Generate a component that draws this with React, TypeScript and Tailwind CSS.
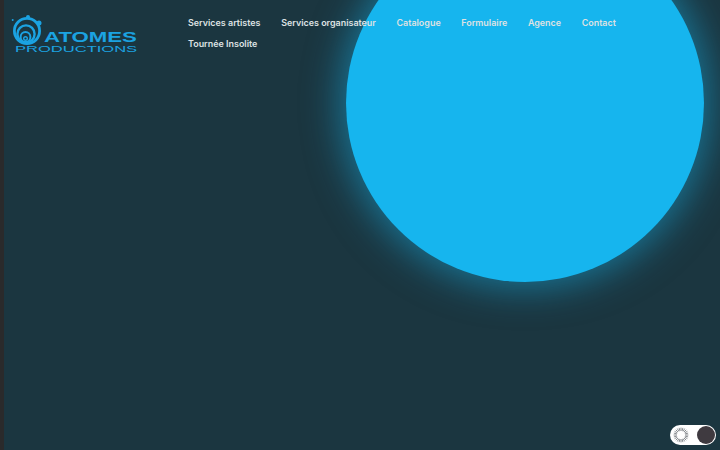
export default function App() {
  const items = ["Services artistes", "Services organisateur", "Catalogue", "Formulaire", "Agence", "Contact", "Tournée Insolite"];
  return (
    <div className="relative flex h-[450px] w-[720px] overflow-hidden bg-[#1b3640] font-['Inter',sans-serif]">
      <div className="absolute left-[346px] top-[-76px] h-[358px] w-[358px] rounded-full bg-[#16b5ee] shadow-[0_0_36px_6px_rgba(22,181,238,0.5)]" />
      <div className="relative h-full w-[4px] shrink-0 bg-[#2a2a2b]" />
      <header className="relative flex h-fit flex-1 items-start pl-[7px] pt-[13px]">
        <div className="flex h-[40px] w-[126px] shrink-0 flex-col">
          <div className="flex h-[31px] items-start">
            <svg width="33" height="32" viewBox="0 0 33 32" fill="none" className="shrink-0">
              <circle cx="16" cy="18" r="12.6" stroke="#1ba3e2" strokeWidth="2.8" />
              <circle cx="15" cy="21" r="8.6" stroke="#1ba3e2" strokeWidth="2.4" />
              <circle cx="14.5" cy="24" r="4.9" stroke="#1ba3e2" strokeWidth="2" />
              <circle cx="14.5" cy="25.5" r="1.8" stroke="#1ba3e2" strokeWidth="1.4" />
              <circle cx="1.7" cy="7" r="1" fill="#1ba3e2" />
              <circle cx="17" cy="4" r="2" fill="#1ba3e2" />
              <circle cx="28" cy="10" r="2.5" fill="#1ba3e2" />
            </svg>
            <span className="mt-[17px] origin-left scale-x-[1.48] whitespace-nowrap font-['Liberation_Sans',sans-serif] text-[15px] font-bold leading-[13px] text-[#1ba3e2]">ATOMES</span>
          </div>
          <span className="ml-[4px] mt-[1px] origin-left scale-x-[1.74] whitespace-nowrap font-['Liberation_Sans',sans-serif] text-[9.5px] font-normal leading-[8px] text-[#1ba3e2]">PRODUCTIONS</span>
        </div>
        <nav className="ml-[51px] flex w-[470px] flex-wrap gap-x-[20.6px] text-[8.95px] font-semibold leading-[20.5px] text-[#dde1e3]">
          {items.map((t, i) => (
            <a key={t} className={i === 6 ? "basis-full whitespace-nowrap" : "whitespace-nowrap"}>{t}</a>
          ))}
        </nav>
      </header>
      <div className="absolute bottom-[5px] right-[4px] flex h-[20px] w-[46px] items-center justify-between rounded-full bg-white pl-[3px] pr-[1px]">
        <svg width="16" height="16" viewBox="0 0 16 16" fill="none" stroke="#6b7075" strokeWidth="0.8">
          {Array.from({ length: 24 }).map((_, i) => {
            const a = (i * Math.PI) / 12;
            return <line key={i} x1={8 + 4.2 * Math.cos(a)} y1={8 + 4.2 * Math.sin(a)} x2={8 + 7.4 * Math.cos(a)} y2={8 + 7.4 * Math.sin(a)} />;
          })}
        </svg>
        <div className="h-[18px] w-[18px] rounded-full bg-[#3f3a40]" />
      </div>
    </div>
  );
}
